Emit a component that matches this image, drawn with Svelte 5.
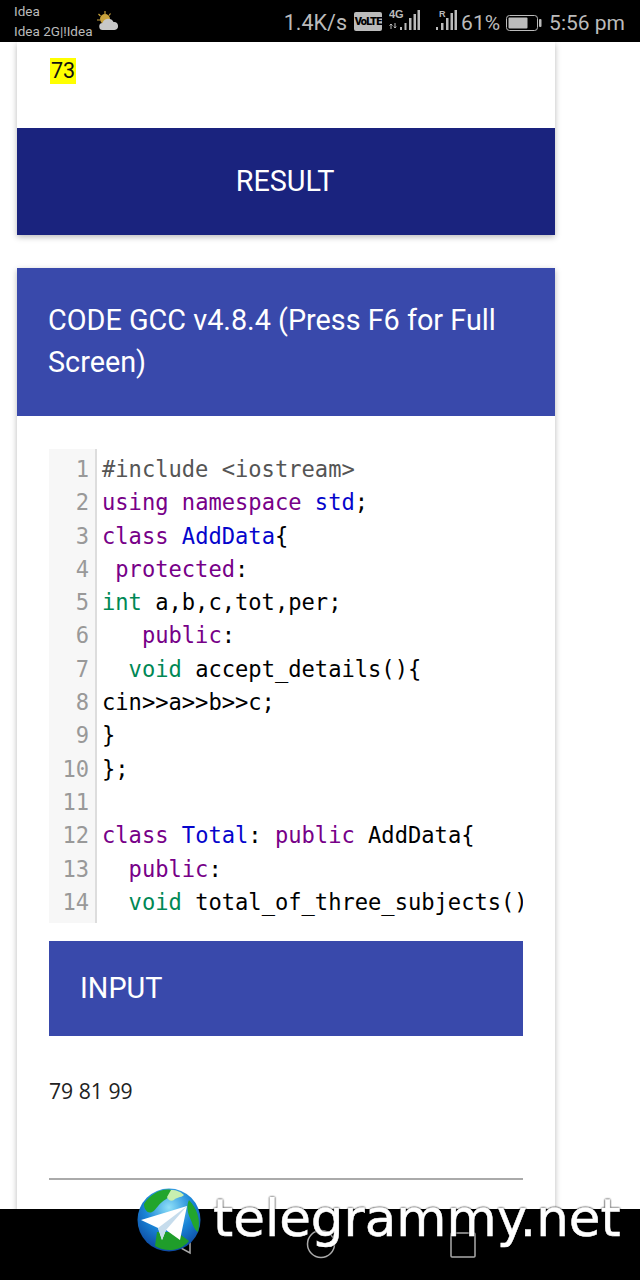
<script lang="ts">
  type Tok = [string, string?];

  const lines: Tok[][] = [
    [['#include <iostream>', 'meta']],
    [['using', 'kw'], [' '], ['namespace', 'kw'], [' '], ['std', 'def'], [';']],
    [['class', 'kw'], [' '], ['AddData', 'def'], ['{']],
    [[' '], ['protected', 'kw'], [':']],
    [['int', 'type'], [' a,b,c,tot,per;']],
    [['   '], ['public', 'kw'], [':']],
    [['  '], ['void', 'type'], [' accept_details(){']],
    [['cin>>a>>b>>c;']],
    [['}']],
    [['};']],
    [],
    [['class', 'kw'], [' '], ['Total', 'def'], [': '], ['public', 'kw'], [' AddData{']],
    [['  '], ['public', 'kw'], [':']],
    [['  '], ['void', 'type'], [' total_of_three_subjects()']],
  ];
</script>

<div class="phone">
  <header class="status">
    <div class="carrier">
      <span>Idea</span>
      <span>Idea 2G|!Idea</span>
    </div>
    <svg class="weather" width="22" height="20" viewBox="0 0 22 20">
      <g stroke="#c9a23c" stroke-width="1.2">
        <path d="M8 0v3M1.500 3l2 2M0 9h3M13.500 2.500l-1.500 2"/>
      </g>
      <circle cx="8" cy="8" r="5" fill="#c9a23c"/>
      <path d="M6 19a3.500 3.500 0 0 1-.5-7 6 6 0 0 1 11-1 4 4 0 0 1 1 8z" fill="#c8c8c8"/>
    </svg>
    <div class="status-right">
      <span class="speed">1.4K/s</span>
      <span class="volte">VoLTE</span>
      <svg width="31" height="24" viewBox="0 0 31 24">
        <text x="0" y="9" class="tiny">4G</text>
        <path d="M2 20v-5M0.500 16.500 2 15l1.500 1.500M6 14v5M4.800 17.500 6 19l1.200-1.500" stroke="#bbb" stroke-width="1" fill="none"/>
        <g fill="#bbb">
          <rect x="11" y="18" width="2" height="3"/>
          <rect x="15.500" y="14" width="2" height="7"/>
          <rect x="20" y="9" width="2.500" height="12"/>
          <rect x="24.500" y="5" width="2.500" height="16"/>
          <rect x="28.500" y="1" width="2.500" height="20"/>
        </g>
      </svg>
      <svg class="sig2" width="21" height="24" viewBox="0 0 21 24">
        <text x="3" y="8" class="tiny small">R</text>
        <g fill="#bbb">
          <rect x="0" y="18" width="2" height="3"/>
          <rect x="5" y="14" width="2.500" height="7"/>
          <rect x="10" y="9" width="2.500" height="12"/>
          <rect x="14.500" y="4" width="2.500" height="17"/>
          <rect x="18.500" y="1" width="2.500" height="20"/>
        </g>
      </svg>
      <span class="pct">61%</span>
      <svg class="batt" width="36" height="18" viewBox="0 0 36 18">
        <rect x="0.500" y="1.500" width="31" height="15" rx="3" fill="none" stroke="#bbb"/>
        <rect x="2.500" y="3.500" width="19" height="11" rx="1" fill="#bbb"/>
        <rect x="33" y="5" width="2.500" height="8" rx="1" fill="#bbb"/>
      </svg>
      <span class="time">5:56 pm</span>
    </div>
  </header>

  <main class="page">
    <section class="card top">
      <div class="answer"><mark>73</mark></div>
      <div class="result">RESULT</div>
    </section>

    <section class="card">
      <h2 class="code-title">CODE GCC v4.8.4 (Press F6 for Full Screen)</h2>
      <div class="card-body">
        <div class="editor">
          <div class="gutter">
            {#each lines as _, i}
              <div class="num">{i + 1}</div>
            {/each}
          </div>
          <pre class="code">{#each lines as line}<div class="line">{#each line as [text, cls]}<span class={cls}>{text}</span>{/each}</div>{/each}</pre>
        </div>
        <div class="input-bar">INPUT</div>
        <p class="input-val">79 81 99</p>
        <hr />
      </div>
    </section>
  </main>

  <footer class="nav">
    <svg width="24" height="26" viewBox="0 0 24 26" class="nav-back">
      <path d="M22 2v22L2 13z" fill="none" stroke="#aaa" stroke-width="1.500"/>
    </svg>
    <svg width="30" height="30" viewBox="0 0 30 30" class="nav-home">
      <circle cx="15" cy="15" r="13.500" fill="none" stroke="#aaa" stroke-width="1.500"/>
    </svg>
    <svg width="26" height="26" viewBox="0 0 26 26" class="nav-recent">
      <rect x="1" y="1" width="24" height="24" rx="1" fill="none" stroke="#aaa" stroke-width="1.500"/>
    </svg>
  </footer>

  <div class="watermark">
    <svg width="64" height="64" viewBox="0 0 64 64">
      <defs>
        <radialGradient id="sea" cx="0.500" cy="0.300" r="0.750">
          <stop offset="0" stop-color="#8fe0f8"/>
          <stop offset="0.500" stop-color="#1a86d8"/>
          <stop offset="1" stop-color="#0b3f98"/>
        </radialGradient>
      </defs>
      <circle cx="32" cy="32" r="31.500" fill="url(#sea)"/>
      <path d="M7 16C14 5 26 0 34 2c3 5-4 8-9 12s-6 8-10 10-8-2-8-8z" fill="#22a52c"/>
      <path d="M34 2c6 0 10 2 13 5-3 3-8 2-10 5-3 2-6 0-7-3z" fill="#c8efb0"/>
      <path d="M52 12c8 8 12 20 9 32-4-2-6-10-8-14s-4-12-1-18z" fill="#22a52c"/>
      <path d="M18 58l2-14 20 0 12 9c-9 11-24 11-34 5z" fill="#1f9d2a"/>
      <path d="M4 32 50 18 43 52 29 42 25 52 21 40z" fill="#fff"/>
      <path d="M21 40 50 18 29 42 25 52z" fill="#c6dcec"/>
    </svg>
    <span class="wm-text">telegrammy.net</span>
  </div>
</div>

<style>
  :global(body) {
    margin: 0;
    background: #fff;
  }

  .phone {
    position: relative;
    width: 640px;
    height: 1280px;
    display: flex;
    flex-direction: column;
    overflow: hidden;
    font-family: Roboto, "Noto Sans", sans-serif;
    background: #fff;
  }

  .status {
    flex: 0 0 42px;
    display: flex;
    align-items: center;
    background: #000;
    color: #bbb;
    padding: 0 15px 0 14px;
    box-sizing: border-box;
  }

  .carrier {
    display: flex;
    flex-direction: column;
    font-size: 13.500px;
    line-height: 19.500px;
    padding-top: 1px;
  }

  .weather {
    margin-left: 5px;
    margin-top: -1px;
  }

  .status-right {
    margin-left: auto;
    display: flex;
    align-items: center;
  }

  .speed {
    font-size: 21.500px;
    margin-right: 7px;
    padding-top: 3px;
  }

  .volte {
    background: #bbb;
    color: #000;
    font-size: 11px;
    font-weight: 900;
    line-height: 19px;
    height: 19px;
    width: 28px;
    text-align: center;
    border-radius: 2px;
    letter-spacing: -0.900px;
    margin-right: 7px;
    overflow: hidden;
  }

  .tiny {
    font-family: "Liberation Sans", sans-serif;
    font-size: 11px;
    font-weight: 700;
    fill: #bbb;
  }

  .tiny.small {
    font-size: 9px;
  }

  .sig2 {
    margin-left: 16px;
  }

  .pct {
    font-size: 21px;
    margin-left: 4px;
    padding-top: 3px;
  }

  .batt {
    margin-left: 6px;
    margin-top: 3px;
  }

  .time {
    font-size: 21px;
    margin-left: 7px;
    padding-top: 3px;
  }

  .page {
    flex: 1;
    min-height: 0;
    overflow: hidden;
    padding: 0 85px 0 17px;
  }

  .card {
    background: #fff;
    box-shadow: 0 2px 6px rgba(0, 0, 0, 0.28);
    margin-bottom: 33px;
  }

  .answer {
    height: 86px;
    padding: 16px 0 0 33px;
    box-sizing: border-box;
  }

  mark {
    display: inline-block;
    background: #ffff00;
    color: #111;
    font-size: 21.500px;
    line-height: 26px;
    padding: 0 1px;
  }

  .result {
    height: 107px;
    padding-bottom: 2px;
    box-sizing: border-box;
    background: #1a237e;
    color: #fff;
    font-size: 28.800px;
    display: flex;
    align-items: center;
    justify-content: center;
    padding-right: 2px;
  }

  .code-title {
    margin: 0;
    height: 148px;
    box-sizing: border-box;
    background: #3949ab;
    color: #fff;
    font-size: 28.800px;
    font-weight: 400;
    line-height: 42px;
    padding: 31px 32px 0 31px;
  }

  .card-body {
    padding: 33px 32px 0;
    height: 800px;
  }

  .editor {
    display: flex;
    height: 474px;
    overflow: hidden;
    font-family: "DejaVu Sans Mono", monospace;
    font-size: 22.100px;
    line-height: 33.300px;
  }

  .gutter {
    flex: 0 0 46px;
    background: #f7f7f7;
    border-right: 2px solid #ddd;
    color: #999;
    text-align: right;
    padding-top: 4px;
  }

  .num {
    height: 33.300px;
    padding-right: 6px;
  }

  .code {
    flex: 1;
    min-width: 0;
    margin: 0;
    padding: 4px 0 0 5px;
    overflow: hidden;
    font: inherit;
    color: #000;
  }

  .line {
    height: 33.300px;
    white-space: pre;
  }

  .kw {
    color: #770088;
  }

  .def {
    color: #0505cc;
  }

  .type {
    color: #008855;
  }

  .meta {
    color: #555555;
  }

  .input-bar {
    margin-top: 18px;
    height: 95px;
    padding: 0 32px 2px 31px;
    box-sizing: border-box;
    background: #3949ab;
    color: #fff;
    font-size: 28.800px;
    display: flex;
    align-items: center;
  }

  .input-val {
    margin: 43px 0 0;
    font-family: "Open Sans", sans-serif;
    font-size: 21.200px;
    line-height: 24px;
    color: #222;
  }

  hr {
    margin: 75px 0 0;
    border: 0;
    border-top: 2px solid #aaa;
  }

  .nav {
    flex: 0 0 71px;
    background: #000;
    position: relative;
    z-index: 1;
    display: flex;
    padding-top: 20px;
    box-sizing: border-box;
  }

  .nav-back {
    margin-left: 168px;
  }

  .nav-home {
    margin-left: 114px;
  }

  .nav-recent {
    margin-left: 114px;
    margin-top: 3px;
  }

  .watermark {
    position: absolute;
    left: 137px;
    top: 1188px;
    z-index: 2;
    display: flex;
    align-items: flex-start;
    height: 92px;
    color: #fff;
  }

  .wm-text {
    margin-left: 12px;
    font-family: "DejaVu Sans", sans-serif;
    font-size: 51.500px;
    line-height: 60px;
    color: #fff;
    -webkit-text-stroke: 0.500px #fff;
    text-shadow: 0 0 2px #000, 0 0 2px #000;
  }
</style>
